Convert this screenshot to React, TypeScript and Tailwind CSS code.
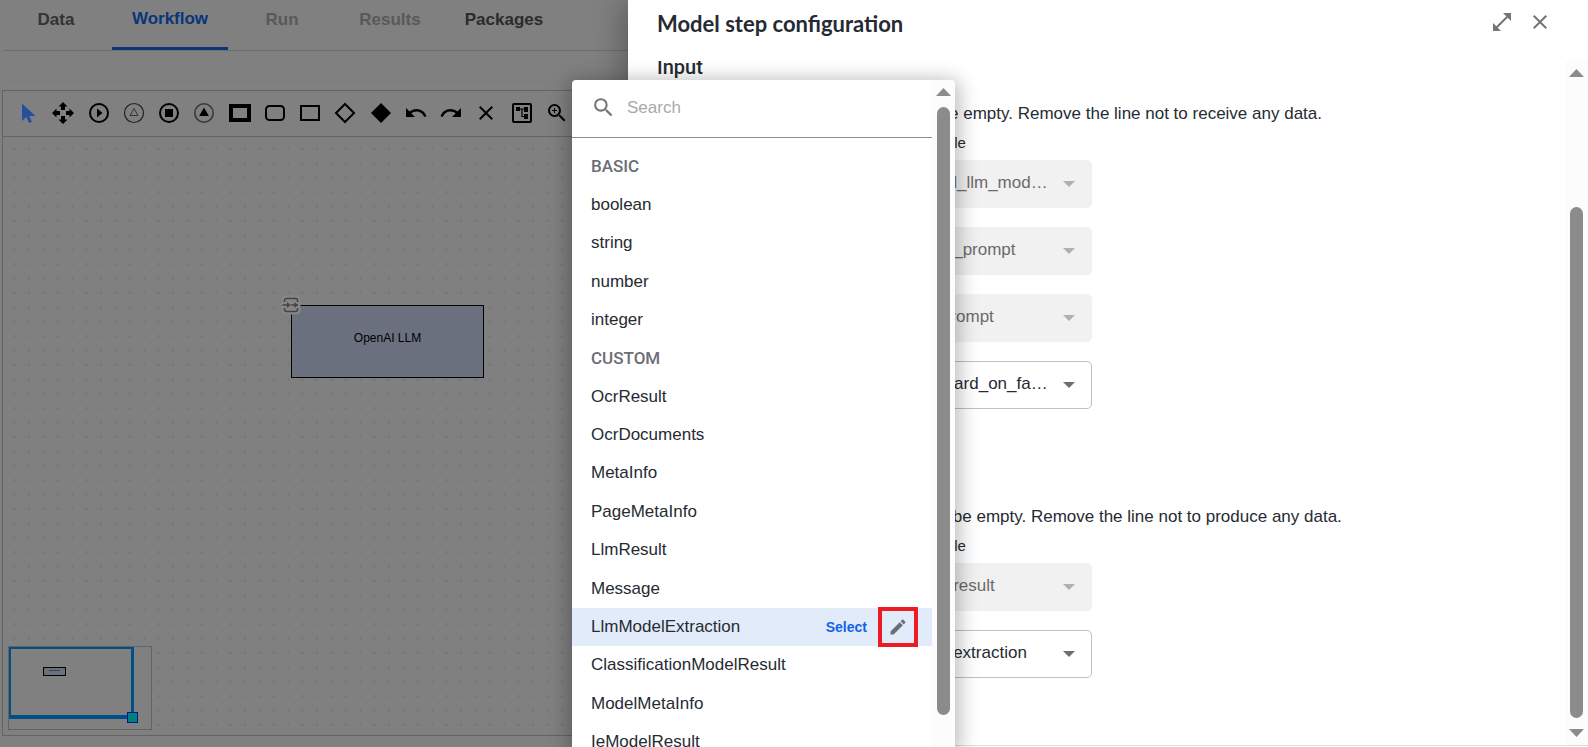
import type { ReactNode } from "react";
import { MdClose, MdEdit, MdOpenInFull, MdRedo, MdSearch, MdUndo, MdZoomIn } from "react-icons/md";

const tabs = [
    { name: "Data", className: "w-20 text-[#333333]" },
    { name: "Workflow", className: "w-[116px] text-[#0a3578] border-b-3 border-[#0a3578]" },
    { name: "Run", className: "w-[76px] text-[#595959]" },
    { name: "Results", className: "w-[108px] text-[#595959]" },
    { name: "Packages", className: "w-[88px] text-[#2b2b2b]" },
];

const typeOptions = [
    { name: "BASIC", header: true },
    { name: "boolean" },
    { name: "string" },
    { name: "number" },
    { name: "integer" },
    { name: "CUSTOM", header: true },
    { name: "OcrResult" },
    { name: "OcrDocuments" },
    { name: "MetaInfo" },
    { name: "PageMetaInfo" },
    { name: "LlmResult" },
    { name: "Message" },
    { name: "LlmModelExtraction", active: true },
    { name: "ClassificationModelResult" },
    { name: "ModelMetaInfo" },
    { name: "IeModelResult" },
];

const Shape = ({ children }: { children: ReactNode }) => (
    <svg viewBox="0 0 22 22" className="size-[22px]" fill="none" stroke="#000" strokeWidth="2">
        {children}
    </svg>
);

const tools: { name: string; icon: ReactNode }[] = [
    {
        name: "Pointer",
        icon: (
            <Shape>
                <path d="M5 1.5V19l4.2-4 2.8 6 3-1.300-2.800-5.700H18.500z" fill="#27509c" stroke="none" />
            </Shape>
        ),
    },
    {
        name: "Move",
        icon: (
            <Shape>
                <path
                    d="M11 0l4.500 4.500H13V8H9V4.500H6.500zM11 22l-4.500-4.500H9V14h4v3.500h2.500zM0 11l4.500-4.500V9H8v4H4.500v2.500zM22 11l-4.500 4.500V13H14V9h3.500V6.500z"
                    fill="#000"
                    stroke="none"
                />
            </Shape>
        ),
    },
    {
        name: "Start",
        icon: (
            <Shape>
                <circle cx="11" cy="11" r="9" />
                <path d="M9 6.500v9l5.500-4.500z" fill="#000" stroke="none" />
            </Shape>
        ),
    },
    {
        name: "Split",
        icon: (
            <Shape>
                <circle cx="11" cy="11" r="9.500" stroke="#222" strokeWidth="1.200" />
                <path d="M11 6.500l4 7H7z" stroke="#333" strokeWidth="1" />
            </Shape>
        ),
    },
    {
        name: "Stop",
        icon: (
            <Shape>
                <circle cx="11" cy="11" r="9" />
                <path d="M7 7h8v8H7z" fill="#000" stroke="none" />
            </Shape>
        ),
    },
    {
        name: "Merge",
        icon: (
            <Shape>
                <circle cx="11" cy="11" r="9.200" stroke="#383838" strokeWidth="1.600" />
                <path d="M11 5.500l4.800 8.500H6.200z" fill="#000" stroke="none" />
            </Shape>
        ),
    },
    {
        name: "Bold step",
        icon: (
            <Shape>
                <rect x="2" y="4" width="18" height="14" strokeWidth="4" />
            </Shape>
        ),
    },
    {
        name: "Rounded step",
        icon: (
            <Shape>
                <rect x="2" y="4" width="18" height="14" rx="3.500" />
            </Shape>
        ),
    },
    {
        name: "Step",
        icon: (
            <Shape>
                <rect x="2" y="4" width="18" height="14" />
            </Shape>
        ),
    },
    {
        name: "Condition",
        icon: (
            <Shape>
                <path d="M11 2l9 9-9 9-9-9z" />
            </Shape>
        ),
    },
    {
        name: "Filled condition",
        icon: (
            <Shape>
                <path d="M11 1l10 10-10 10L1 11z" fill="#000" stroke="none" />
            </Shape>
        ),
    },
    { name: "Undo", icon: <MdUndo className="size-6" /> },
    { name: "Redo", icon: <MdRedo className="size-6" /> },
    { name: "Delete", icon: <MdClose className="size-6" /> },
    {
        name: "Layout",
        icon: (
            <Shape>
                <rect x="2" y="2" width="18" height="18" rx="1" />
                <path d="M5 5h4v4H5zM13 5h4v5h-4zM13 12h4v5h-4z" fill="#000" stroke="none" />
                <path d="M9 7h4M11 7v7.500h2" strokeWidth="1.200" />
            </Shape>
        ),
    },
    { name: "Zoom in", icon: <MdZoomIn className="size-6" /> },
];

const Workspace = () => (
    <main className="flex min-w-0 flex-1 flex-col bg-[#808080] pb-[11px] pl-[2px]">
        <nav className="ml-px flex h-[51px] shrink-0 gap-4 border-b border-[#6e6e6e] pl-[13px]">
            {tabs.map((tab) => (
                <button
                    key={tab.name}
                    className={`h-[50px] shrink-0 pb-[10px] text-center text-[17px] leading-5 font-bold ${tab.className}`}
                >
                    {tab.name}
                </button>
            ))}
        </nav>
        <div className="ml-[3px] h-[30px] shrink-0 border-b border-[#837a7a]" />
        <section className="mt-[9px] flex min-h-0 flex-1 flex-col border-y border-l border-[#646464]">
            <div className="h-[46px] shrink-0 border-b border-[#646464]">
                <div className="flex h-11 w-[565px] items-center justify-between pl-[14px]">
                    {tools.map((tool) => (
                        <button
                            key={tool.name}
                            aria-label={tool.name}
                            className="flex size-[22px] items-center justify-center text-black"
                        >
                            <span className="shrink-0">{tool.icon}</span>
                        </button>
                    ))}
                </div>
            </div>
            <Canvas />
        </section>
    </main>
);

const Canvas = () => (
    <div className="relative min-h-0 flex-1 overflow-hidden">
        <svg className="absolute inset-0 size-full" aria-hidden="true">
            <defs>
                <pattern id="grid" x="4.600" y="5" width="14.400" height="14.400" patternUnits="userSpaceOnUse">
                    <path d="M5.500 7h3M7 5.500v3" stroke="#747474" strokeWidth="1" />
                </pattern>
            </defs>
            <rect width="100%" height="100%" fill="url(#grid)" />
        </svg>

        <div className="absolute top-[168px] left-[288px] h-[73px] w-[193px] border border-black bg-[#6b707f] pt-6 text-center text-xs text-black">
            OpenAI LLM
        </div>
        <svg className="absolute top-[158px] left-[278px] size-5" viewBox="0 0 20 20" fill="none" aria-hidden="true">
            <rect x="0.500" y="0.500" width="19" height="19" rx="4" fill="#868686" />
            <path
                d="M3.500 7V5.500a2 2 0 0 1 2-2h9a2 2 0 0 1 2 2V7M3.500 13v1.500a2 2 0 0 0 2 2h9a2 2 0 0 0 2-2V13"
                stroke="#444"
                strokeWidth="1.500"
            />
            <path d="M1.500 10H8M10 10h7" stroke="#444" strokeWidth="1.400" />
            <path d="M6 7l3.500 3L6 13zM13.500 7l3.500 3-3.500 3z" fill="#444" />
        </svg>

        <div className="absolute bottom-[5px] left-[5px] h-[84px] w-[144px] border border-[#636363] bg-[#808080]">
            <div className="relative h-[72px] w-[125px] border-t-2 border-r-3 border-b-4 border-l-2 border-[#004f86]">
                <div className="absolute top-[18px] left-8 h-[9px] w-[23px] border border-black bg-[#6b707f] px-[5px] pt-[2px]">
                    <div className="h-px bg-[#444]" />
                </div>
                <div className="absolute -right-[7px] -bottom-2 size-[11px] border border-[#001a80] bg-[#008080]" />
            </div>
        </div>
    </div>
);

const Arrow = ({ down = false }: { down?: boolean }) => (
    <svg viewBox="0 0 15 8" className="h-2 w-[15px] shrink-0" fill="#8b8b8b" aria-hidden="true">
        <path d={down ? "M0 0h15L7.500 8z" : "M0 8h15L7.500 0z"} />
    </svg>
);

interface VariableProps {
    id: string;
    value: string;
    disabled?: boolean;
}

const VariableSelect = ({ id, value, disabled }: VariableProps) => (
    <div className="relative">
        <select
            id={id}
            aria-label={value}
            disabled={disabled}
            className="h-12 w-full appearance-none rounded-[5px] border border-[#c0c0c0] bg-white pb-[2px] pl-[17px] text-[17px] text-[#262b33] opacity-100 disabled:border-[#f1f1f1] disabled:bg-[#f1f1f1] disabled:text-[#6b6b6b]"
        >
            <option>{value}</option>
        </select>
        <svg
            viewBox="0 0 12 6"
            className={`pointer-events-none absolute top-[21px] right-[17px] h-[6px] w-3 ${disabled ? "fill-[#b0b0b0]" : "fill-[#6e6e6e]"}`}
            aria-hidden="true"
        >
            <path d="M0 0h12L6 6z" />
        </svg>
    </div>
);

const TypeMenu = () => (
    <div className="absolute top-20 bottom-0 -left-14 flex w-[383px] overflow-hidden rounded-t-[4px] bg-white shadow-[0_4px_20px_4px_rgba(0,0,0,0.28)]">
        <div className="min-w-0 flex-1">
            <label className="flex h-[58px] items-center gap-[11px] border-b border-[#8b8b8b] pb-[2px] pl-[19px]">
                <MdSearch className="size-[25px] text-[#757575]" />
                <input
                    type="search"
                    aria-label="Search"
                    placeholder="Search"
                    className="min-w-0 flex-1 text-[17px] outline-none placeholder:text-[#a9a9a9]"
                />
            </label>
            <ul className="mt-[9px] grid h-[614px] auto-rows-fr text-[17px] text-[#262b33]">
                {typeOptions.map((option) => (
                    <li
                        key={option.name}
                        className={`flex items-center pl-[19px] ${option.active ? "bg-[#e2ebfa]" : ""} ${
                            option.header ? "pt-[2px] font-[Roboto] font-medium text-[#6b6e73]" : ""
                        }`}
                    >
                        <span className="flex-1">{option.name}</span>
                        {option.active && (
                            <>
                                <button className="text-sm font-bold text-[#1463e8]">Select</button>
                                <button
                                    aria-label="Edit"
                                    className="-my-1 mr-[14px] ml-[11px] flex size-10 items-center justify-center border-4 border-[#ed1c24] text-[#6b6e73]"
                                >
                                    <MdEdit className="size-5" />
                                </button>
                            </>
                        )}
                    </li>
                ))}
            </ul>
        </div>
        <div className="flex w-[23px] flex-col items-center bg-[#fcfcfc] pt-2 pb-8">
            <Arrow />
            <div className="mt-[11px] w-[13px] flex-1 rounded-full bg-[#8b8b8b]" />
        </div>
    </div>
);

const StepDrawer = () => (
    <aside className="relative flex w-[960px] shrink-0 flex-col bg-white pb-px text-[#262b33] shadow-[0_6px_30px_5px_rgba(0,0,0,0.3)]">
        <header className="flex h-[61px] shrink-0 items-start justify-between pt-[10px] pr-9 pl-[29px]">
            <h2 className="font-[Lato] text-[22px] leading-7 font-bold">Model step configuration</h2>
            <div className="flex gap-[14px] text-[#757575]">
                <button aria-label="Expand">
                    <MdOpenInFull className="size-6" />
                </button>
                <button aria-label="Close">
                    <MdClose className="size-6" />
                </button>
            </div>
        </header>
        <div className="flex min-h-0 flex-1 border-b border-[#dddddd]">
            <div className="min-w-0 flex-1 overflow-hidden pl-[29px]">
                <h3 className="font-[Roboto] text-[20px] leading-3 font-medium">Input</h3>
                <p className="mt-[29px] text-[17px] leading-6 whitespace-nowrap">
                    Input type and variable boxes cannot be empty. Remove the line not to receive any data.
                </p>
                <div className="ml-[247px] w-[188px]">
                    <div className="mt-[7px] pl-2 text-[15px] leading-5">Variable</div>
                    <div className="mt-[7px] flex flex-col gap-[19px]">
                        <VariableSelect id="model" value="local_llm_mod…" disabled />
                        <VariableSelect id="first-prompt" value="task_prompt" disabled />
                        <VariableSelect id="second-prompt" value="q_prompt" disabled />
                        <VariableSelect id="forward" value="forward_on_fa…" />
                    </div>
                </div>
                <h3 className="mt-[52px] font-[Roboto] text-[20px] leading-3 font-medium">Output</h3>
                <p className="mt-8 text-[17px] leading-6 whitespace-nowrap">
                    Output type and variable boxes cannot be empty. Remove the line not to produce any data.
                </p>
                <div className="ml-[247px] w-[188px]">
                    <div className="mt-[7px] pl-2 text-[15px] leading-5">Variable</div>
                    <div className="mt-[7px] flex flex-col gap-[19px]">
                        <VariableSelect id="result" value="llm_result" disabled />
                        <VariableSelect id="extraction" value="llm_extraction" />
                    </div>
                </div>
            </div>
            <div className="flex w-[23px] shrink-0 flex-col items-center bg-[#fcfcfc] py-2">
                <Arrow />
                <div className="mt-[130px] mb-[11px] w-[13px] flex-1 rounded-full bg-[#8b8b8b]" />
                <Arrow down />
            </div>
        </div>
        <TypeMenu />
    </aside>
);

const App = () => (
    <div className="flex h-screen overflow-hidden font-['Liberation_Sans',Arial,sans-serif]">
        <Workspace />
        <StepDrawer />
    </div>
);

export default App;
